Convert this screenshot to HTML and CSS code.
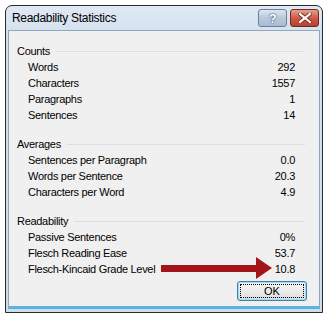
FILE: index.html
```html
<!DOCTYPE html>
<html lang="en">

<head>
    <meta charset="utf-8">
    <meta name="viewport" content="width=device-width, initial-scale=1.0">
    <title>Readability Statistics</title>
    <link rel="stylesheet" href="styles.css">
</head>

<body>
    <div class="vindue">
        <div class="titel">
            <span class="titeltekst">Readability Statistics</span>
            <div class="knapper">
                <div class="hjælp">?</div>
                <div class="luk">
                    <svg width="14" height="10" viewBox="0 0 14 10">
                        <path d="M2 1 L12 9 M12 1 L2 9" stroke="#7a2a22" stroke-width="4" stroke-linecap="square"/>
                        <path d="M2 1 L12 9 M12 1 L2 9" stroke="#fff" stroke-width="2.2" stroke-linecap="square"/>
                    </svg>
                </div>
            </div>
        </div>
        <div class="indhold">
            <section class="gruppe">
                <h3 class="overskrift"><span>Counts</span></h3>
                <div class="række"><span>Words</span><span>292</span></div>
                <div class="række"><span>Characters</span><span>1557</span></div>
                <div class="række"><span>Paragraphs</span><span>1</span></div>
                <div class="række"><span>Sentences</span><span>14</span></div>
            </section>
            <section class="gruppe">
                <h3 class="overskrift"><span>Averages</span></h3>
                <div class="række"><span>Sentences per Paragraph</span><span>0.0</span></div>
                <div class="række"><span>Words per Sentence</span><span>20.3</span></div>
                <div class="række"><span>Characters per Word</span><span>4.9</span></div>
            </section>
            <section class="gruppe">
                <h3 class="overskrift"><span>Readability</span></h3>
                <div class="række"><span>Passive Sentences</span><span>0%</span></div>
                <div class="række"><span>Flesch Reading Ease</span><span>53.7</span></div>
                <div class="række"><span>Flesch-Kincaid Grade Level</span><span>10.8</span></div>
            </section>
            <div class="bund">
                <button class="ok"><span>OK</span></button>
            </div>
        </div>
    </div>
    <svg class="pil" width="112" height="24" viewBox="0 0 112 24">
        <path d="M0 9 H95 V1 L111 12 L95 23 V16 H0 Z" fill="#a3141b"/>
    </svg>
</body>

</html>
```

FILE: styles.css
```css
body {
    margin: 0;
    background: white;
    font-family: "Liberation Sans", Arial, sans-serif;
    font-size: 11px;
    letter-spacing: -0.3px;
    color: #000;
}

.vindue {
    margin: 5px 0 0 5px;
    width: 318px;
    height: 308px;
    box-sizing: border-box;
    border: 1px solid #2a2a2a;
    border-radius: 7px 7px 0 0;
    background: linear-gradient(#dfe9f5, #d3e0ee 30px, #cfdceb);
    display: flex;
    flex-direction: column;
}

.titel {
    height: 24px;
    display: flex;
    justify-content: space-between;
    padding: 0 3px 0 6px;
}

.titeltekst {
    font-size: 12px;
    line-height: 24px;
}

.knapper {
    display: flex;
    gap: 3px;
    margin-top: 3px;
}

.hjælp,
.luk {
    height: 16px;
    border: 1px solid #6d7f94;
    border-radius: 3px;
    display: flex;
    align-items: center;
    justify-content: center;
}

.hjælp {
    width: 27px;
    background: linear-gradient(#dde6f0, #b7c8dc 50%, #a8bcd3);
    color: #fff;
    font-weight: bold;
    font-size: 13px;
    text-shadow: 0 0 2px #3b4f68, 0 0 1px #3b4f68;
}

.luk {
    width: 27px;
    border-color: #6e2b22;
    background: linear-gradient(#e7a08f, #cf5a45 50%, #b8402e);
}

.indhold {
    flex: 1;
    margin: 0 2px 3px 2px;
    border: 1px solid #8fa6bd;
    border-bottom: 3px solid #5cb3de;
    background: #f0f0f0;
    padding: 12px 0 0 8px;
    display: flex;
    flex-direction: column;
    gap: 13px;
}

.gruppe {
    padding-right: 14px;
}

.overskrift {
    margin: 0;
    font-size: 11px;
    font-weight: normal;
    line-height: 16px;
    display: flex;
    align-items: center;
    gap: 6px;
}

.overskrift::after {
    content: "";
    flex: 1;
    border-top: 1px solid #d5dfe5;
}

.række {
    display: flex;
    justify-content: space-between;
    line-height: 16px;
    padding: 0 10px 0 11px;
}

.bund {
    display: flex;
    justify-content: flex-end;
    padding-right: 12px;
    margin-top: -9px;
}

.ok {
    width: 70px;
    height: 20px;
    padding: 2px;
    font: inherit;
    letter-spacing: 0;
    border: 1px solid #3c7fb1;
    border-radius: 3px;
    background: linear-gradient(#f4f4f4, #ececec 50%, #dcdcdc);
    box-shadow: 0 0 0 1px #9fdcf5 inset;
}

.ok span {
    display: block;
    height: 100%;
    box-sizing: border-box;
    border: 1px dotted #000;
    line-height: 12px;
}

.pil {
    position: absolute;
    left: 161px;
    top: 256px;
}
```
